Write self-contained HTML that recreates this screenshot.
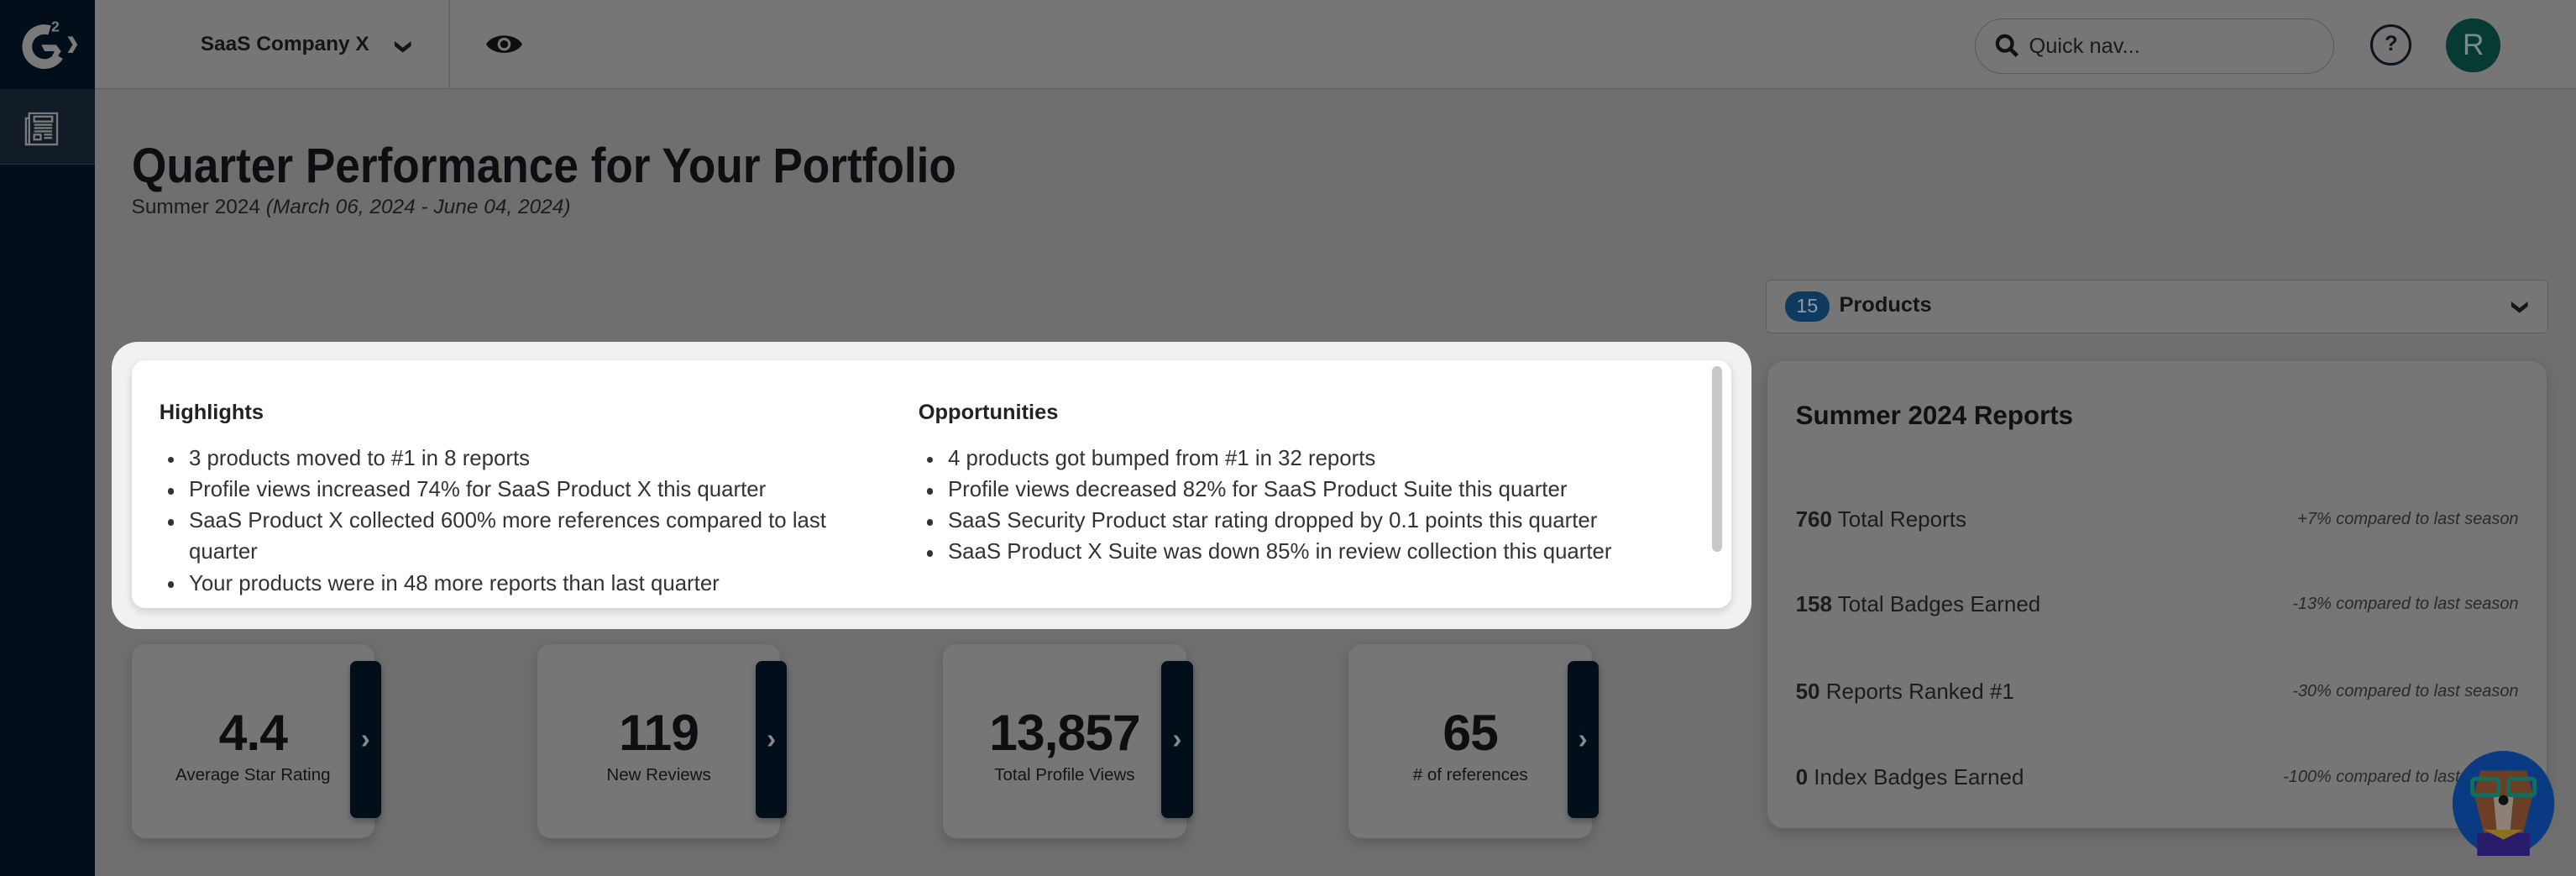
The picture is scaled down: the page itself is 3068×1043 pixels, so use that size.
<!DOCTYPE html>
<html><head><meta charset="utf-8"><style>
html{zoom:1.95663}
*{box-sizing:border-box;margin:0;padding:0}
body{width:1568px;height:533px;overflow:hidden;background:#6f6f6f;font-family:"Liberation Sans",sans-serif;color:#111;position:relative}
.abs{position:absolute}
.side{left:0;top:0;width:58px;height:533px;background:#020e1a}
.side .it{position:absolute;left:0;top:54px;width:58px;height:46px;background:#121c27;border-bottom:1px solid #253140}
.top{left:58px;top:0;width:1510px;height:54px;background:#767676;border-bottom:1px solid #5e5e5e}
h1{position:absolute;left:80px;top:84px;font-size:30px;font-weight:bold;color:#0e0e12;transform:scaleX(.906);transform-origin:left top;white-space:nowrap}
.sub{left:80px;top:119px;font-size:12.5px;color:#1c1c1c}
.card{background:#767676;border-radius:8px;box-shadow:0 3px 8px rgba(0,0,0,.18)}
.stat{top:392px;width:148px;height:118px;text-align:center}
.stat b{display:block;font-size:31px;margin-top:36px;color:#0d0d12;letter-spacing:-.5px}
.stat span{display:block;font-size:10.5px;margin-top:2px;color:#151515}
.tab{top:402px;width:19px;height:96px;background:#020e1a;border-radius:4px;box-shadow:0 2px 4px rgba(0,0,0,.3);color:#888;font-weight:bold;font-size:17px;text-align:center;line-height:96px}
.row{position:absolute;left:17px;right:17px;font-size:13.3px;color:#1c1c1c}
.row i{position:absolute;right:0;font-size:10.2px;top:2px;color:#2a2a2a}
ul{list-style:none}
li{position:relative;padding-left:18px;font-size:13.2px;line-height:19px;color:#333}
li:before{content:"";position:absolute;left:5px;top:8px;width:4px;height:4px;border-radius:50%;background:#333}
h3{font-size:13px;font-weight:bold;color:#222}
</style></head><body>
<div class="abs side">
 <svg class="abs" style="left:8px;top:9px" width="46" height="36" viewBox="0 0 46 36"><path d="M22 9.2A10.5 10.5 0 1 0 27.6 25" fill="none" stroke="#7a7a7a" stroke-width="6"/><path d="M17 18h9l3 4-4 6-2-2 2-4h-6z" fill="#7a7a7a"/><text x="23" y="10" font-size="9" font-weight="bold" fill="#7a7a7a" font-family="Liberation Sans">2</text><path d="M33 13h3l3 5-3 5h-3l3-5z" fill="#7a7a7a"/></svg>
 <div class="it"><svg class="abs" style="left:13px;top:12px" width="24" height="24" viewBox="0 0 24 24" fill="none" stroke="#7a7a7a" stroke-width="1.2"><path d="M5 3h17v19H3V6h2z"/><path d="M5 6v16"/><rect x="8" y="5" width="11" height="3"/><path d="M8 10h11M8 12h11M8 14h11M14 16h5M14 18h5"/><rect x="8" y="16" width="4" height="3"/></svg></div>
</div>
<div class="abs top">
 <div class="abs" style="left:64px;top:20px;font-size:12.5px;font-weight:bold;color:#151515">SaaS Company X</div>
 <svg class="abs" style="left:181px;top:24px" width="12" height="9" viewBox="0 0 12 9"><path d="M1 1l5 4 5-4v3l-5 4-5-4z" fill="#151515"/></svg>
 <div class="abs" style="left:215px;top:0;width:1px;height:54px;background:#666"></div>
 <svg class="abs" style="left:237px;top:19px" width="24" height="16" viewBox="0 0 24 16"><path d="M1 8C5 1 19 1 23 8C19 15 5 15 1 8z" fill="#0d0d12"/><circle cx="12" cy="8" r="4" fill="#767676"/><circle cx="12" cy="8" r="2.4" fill="#0d0d12"/></svg>
 <div class="abs" style="left:1144px;top:11px;width:219px;height:34px;border:1px solid #5a5a5a;border-radius:17px"></div>
 <svg class="abs" style="left:1156px;top:20px" width="16" height="16" viewBox="0 0 16 16"><circle cx="6.5" cy="6.5" r="4.5" fill="none" stroke="#111" stroke-width="2.2"/><path d="M10 10l4 4" stroke="#111" stroke-width="2.4"/></svg>
 <div class="abs" style="left:1177px;top:21px;font-size:13px;color:#1a1a1a">Quick nav...</div>
 <div class="abs" style="left:1385px;top:15px;width:25px;height:25px;border:2px solid #0d1420;border-radius:50%;text-align:center;font-size:13px;font-weight:bold;line-height:21px;color:#0d1420">?</div>
 <div class="abs" style="left:1431px;top:11px;width:33px;height:33px;border-radius:50%;background:#063a32;text-align:center;color:#7a8c88;font-size:18px;line-height:33px">R</div>
</div>
<h1>Quarter Performance for Your Portfolio</h1>
<div class="abs sub">Summer 2024 <i>(March 06, 2024 - June 04, 2024)</i></div>

<div class="abs" style="left:68px;top:208px;width:998px;height:175px;background:#f1f1f1;border-radius:16px"></div>
<div class="abs" style="left:80px;top:219px;width:974px;height:151px;background:#fff;border-radius:8px;box-shadow:0 2px 5px rgba(0,0,0,.15)">
 <div class="abs" style="left:962px;top:4px;width:6px;height:113px;background:#c8c8c8;border-radius:3px"></div>
 <div class="abs" style="left:17px;top:25px;width:430px"><h3>Highlights</h3>
 <ul style="margin-top:11px"><li>3 products moved to #1 in 8 reports</li><li>Profile views increased 74% for SaaS Product X this quarter</li><li>SaaS Product X collected 600% more references compared to last quarter</li><li>Your products were in 48 more reports than last quarter</li></ul></div>
 <div class="abs" style="left:479px;top:25px;width:470px"><h3>Opportunities</h3>
 <ul style="margin-top:11px"><li>4 products got bumped from #1 in 32 reports</li><li>Profile views decreased 82% for SaaS Product Suite this quarter</li><li>SaaS Security Product star rating dropped by 0.1 points this quarter</li><li>SaaS Product X Suite was down 85% in review collection this quarter</li></ul></div>
</div>

<div class="abs card stat" style="left:80px"><b>4.4</b><span>Average Star Rating</span></div><div class="abs tab" style="left:213px">›</div>
<div class="abs card stat" style="left:327px"><b>119</b><span>New Reviews</span></div><div class="abs tab" style="left:460px">›</div>
<div class="abs card stat" style="left:574px"><b>13,857</b><span>Total Profile Views</span></div><div class="abs tab" style="left:707px">›</div>
<div class="abs card stat" style="left:821px"><b>65</b><span># of references</span></div><div class="abs tab" style="left:954px">›</div>

<div class="abs" style="left:1075px;top:170px;width:476px;height:33px;border:1px solid #5e5e5e;border-radius:3px;background:#767676">
 <div class="abs" style="left:11px;top:7px;width:27px;height:18px;border-radius:9px;background:#0e3a5e;color:#8a9aa8;font-size:12px;text-align:center;line-height:18px">15</div>
 <div class="abs" style="left:44px;top:8px;font-size:13px;font-weight:bold;color:#151515">Products</div>
 <svg class="abs" style="left:452px;top:12px" width="12" height="9" viewBox="0 0 12 9"><path d="M1 1l5 4 5-4v3l-5 4-5-4z" fill="#151515"/></svg>
</div>
<div class="abs card" style="left:1076px;top:220px;width:474px;height:284px;border-radius:10px">
 <div class="abs" style="left:17px;top:24px;font-size:16px;font-weight:bold;color:#111">Summer 2024 Reports</div>
 <div class="row" style="top:88px"><b>760</b> Total Reports<i>+7% compared to last season</i></div>
 <div class="row" style="top:140px"><b>158</b> Total Badges Earned<i>-13% compared to last season</i></div>
 <div class="row" style="top:193px"><b>50</b> Reports Ranked #1<i>-30% compared to last season</i></div>
 <div class="row" style="top:245px"><b>0</b> Index Badges Earned<i>-100% compared to last season</i></div>
</div>
<svg class="abs" style="left:1492px;top:457px" width="64" height="64" viewBox="0 0 64 64"><ellipse cx="32" cy="32" rx="31" ry="32" fill="#0a3a82"/><path d="M18 12l28 0 4 14-6 24-24 0-6-24z" fill="#6b3f26"/><path d="M26 28h12l-2 22h-8z" fill="#8c8078"/><rect x="13" y="17" width="16" height="10" rx="2" fill="none" stroke="#0f6e62" stroke-width="2.5"/><rect x="35" y="17" width="16" height="10" rx="2" fill="none" stroke="#0f6e62" stroke-width="2.5"/><circle cx="32" cy="30" r="3" fill="#111"/><path d="M16 50h32v14H16z" fill="#2a1a6a"/><path d="M20 48l12 6 12-6" fill="#8a7020"/></svg>
</body></html>
